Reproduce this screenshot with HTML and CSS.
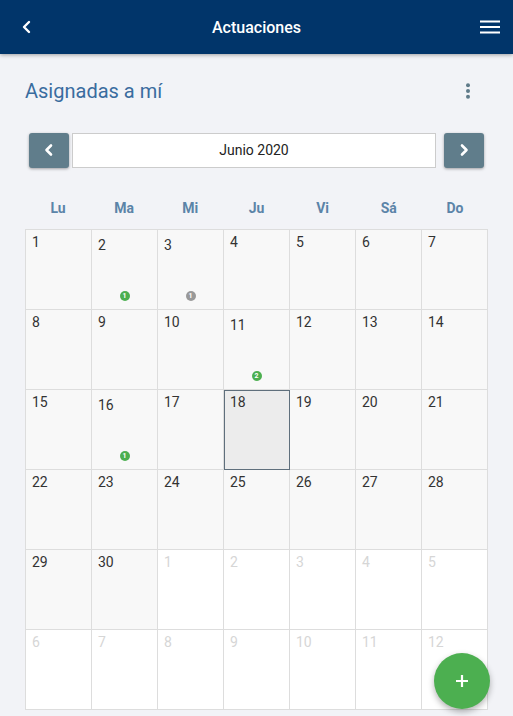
FILE: index.html
```html
<!DOCTYPE html>
<html lang="es">
<head>
    <meta charset="UTF-8">
    <meta name="viewport" content="width=device-width, initial-scale=1.0">
    <title>Actuaciones</title>
    <link rel="stylesheet" href="styles.css">
</head>
<body>
    <header class="topbar">
        <button class="icon-btn back" aria-label="Volver">
            <svg width="14" height="14" viewBox="0 0 14 14"><path d="M9 2 L4 7 L9 12" fill="none" stroke="#fff" stroke-width="2.4" stroke-linecap="round" stroke-linejoin="round"/></svg>
        </button>
        <div class="topbar-title">Actuaciones</div>
        <button class="icon-btn menu" aria-label="Menú">
            <svg width="20" height="14" viewBox="0 0 20 14"><rect x="0" y="0.5" width="20" height="2" fill="#fff"/><rect x="0" y="6" width="20" height="2" fill="#fff"/><rect x="0" y="11.5" width="20" height="2" fill="#fff"/></svg>
        </button>
    </header>

    <main class="content">
        <div class="section-head">
            <h1 class="section-title">Asignadas a mí</h1>
            <button class="kebab" aria-label="Opciones">
                <svg width="6" height="16" viewBox="0 0 6 16"><circle cx="3" cy="2.3" r="2" fill="#5f7b89"/><circle cx="3" cy="8" r="2" fill="#5f7b89"/><circle cx="3" cy="13.7" r="2" fill="#5f7b89"/></svg>
            </button>
        </div>

        <div class="month-nav">
            <button class="nav-btn" aria-label="Mes anterior">
                <svg width="12" height="14" viewBox="0 0 12 14"><path d="M8 2.5 L3.5 7 L8 11.5" fill="none" stroke="#fff" stroke-width="2.6" stroke-linecap="round" stroke-linejoin="round"/></svg>
            </button>
            <div class="month-field">Junio 2020</div>
            <button class="nav-btn" aria-label="Mes siguiente">
                <svg width="12" height="14" viewBox="0 0 12 14"><path d="M4 2.5 L8.5 7 L4 11.5" fill="none" stroke="#fff" stroke-width="2.6" stroke-linecap="round" stroke-linejoin="round"/></svg>
            </button>
        </div>

        <div class="weekdays">
            <div>Lu</div><div>Ma</div><div>Mi</div><div>Ju</div><div>Vi</div><div>Sá</div><div>Do</div>
        </div>

        <div class="calendar" id="calendar"></div>
    </main>

    <button class="fab" aria-label="Nueva actuación">
        <svg width="16" height="16" viewBox="0 0 16 16"><path d="M8 2 V14 M2 8 H14" stroke="#fff" stroke-width="2.2"/></svg>
    </button>

    <script>
        // June 2020 starts on a Monday, 30 days, then fill up to 42 cells
        const events = { 2: { n: 1, type: 'ok' }, 3: { n: 1, type: 'grey' }, 11: { n: 2, type: 'ok' }, 16: { n: 1, type: 'ok' } };
        const selected = 18;
        const cal = document.getElementById('calendar');

        for (let i = 0; i < 42; i++) {
            const cell = document.createElement('div');
            cell.className = 'day';
            let num = i + 1;
            if (num > 30) {
                num = num - 30;
                cell.classList.add('other');
            }
            const ev = !cell.classList.contains('other') ? events[num] : null;
            if (ev) cell.classList.add('has-event');
            if (num === selected && !cell.classList.contains('other')) cell.classList.add('selected');

            const label = document.createElement('span');
            label.className = 'day-num';
            label.textContent = num;
            cell.appendChild(label);

            if (ev) {
                const badge = document.createElement('span');
                badge.className = 'badge ' + ev.type;
                badge.textContent = ev.n;
                cell.appendChild(badge);
            }
            cal.appendChild(cell);
        }
    </script>
</body>
</html>
```

FILE: styles.css
```css
body {
    margin: 0;
    background-color: #f2f3f7;
    font-family: Roboto, "Noto Sans", sans-serif;
    color: #333;
}

button {
    border: none;
    background: none;
    padding: 0;
    cursor: pointer;
}

.topbar {
    height: 54px;
    background-color: #01356a;
    display: grid;
    grid-template-columns: 1fr auto 1fr;
    align-items: center;
    padding: 0 13px 0 20px;
    box-shadow: 0 1px 4px rgba(0,0,0,0.35);
    position: relative;
    z-index: 1;
}

.icon-btn {
    display: flex;
    align-items: center;
    height: 30px;
}

.icon-btn.menu {
    justify-self: end;
}

.topbar-title {
    color: #fff;
    font-size: 16px;
    font-weight: 500;
    padding-right: 7px;
}

.content {
    padding: 0 25px 0 25px;
}

.section-head {
    display: flex;
    align-items: center;
    justify-content: space-between;
    height: 76px;
}

.section-title {
    margin: 0;
    font-size: 20px;
    font-weight: 400;
    color: #3a6c9f;
    padding-bottom: 2px;
}

.kebab {
    width: 30px;
    height: 30px;
    display: flex;
    align-items: center;
    justify-content: center;
    margin-right: 5px;
    padding-bottom: 3px;
}

.month-nav {
    display: flex;
    align-items: center;
    padding: 2px 4px 0 4px;
    height: 36px;
}

.nav-btn {
    width: 40px;
    height: 35px;
    background-color: #607d8b;
    border-radius: 3px;
    box-shadow: 0 1px 3px rgba(0,0,0,0.35);
    display: flex;
    align-items: center;
    justify-content: center;
}

.month-field {
    flex: 1;
    height: 33px;
    margin: 0 8px 0 3px;
    background-color: #fff;
    border: 1px solid #ccc;
    display: flex;
    align-items: center;
    justify-content: center;
    font-size: 14px;
    color: #222;
}

.weekdays {
    display: grid;
    grid-template-columns: repeat(7, 1fr);
    margin-top: 27px;
    height: 26px;
    align-items: center;
    text-align: center;
    font-size: 14px;
    font-weight: 700;
    color: #5b84a8;
    margin-bottom: 8px;
}

.calendar {
    display: grid;
    grid-template-columns: repeat(7, 1fr);
    grid-auto-rows: 80px;
    border-top: 1px solid #ddd;
    border-left: 1px solid #ddd;
}

.day {
    background-color: #f8f8f8;
    border-right: 1px solid #ddd;
    border-bottom: 1px solid #ddd;
    position: relative;
    padding: 4px 6px;
    font-size: 14px;
}

.day.has-event {
    padding-top: 7px;
}

.day.other {
    background-color: #fff;
    color: #d6d6d6;
}

.day.selected {
    background-color: #ececec;
    outline: 1px solid #5f6f7c;
    outline-offset: -1px;
    border-color: #5f6f7c;
}

.badge {
    position: absolute;
    left: 50%;
    bottom: 8px;
    transform: translateX(-50%);
    width: 10px;
    height: 10px;
    border-radius: 50%;
    font-size: 7px;
    font-weight: 700;
    line-height: 10px;
    text-align: center;
    color: #fff;
}

.badge.ok {
    background-color: #4caf50;
}

.badge.grey {
    background-color: #999;
}

.fab {
    position: fixed;
    right: 23px;
    bottom: 7px;
    width: 56px;
    height: 56px;
    border-radius: 50%;
    background-color: #4caf50;
    box-shadow: 0 3px 6px rgba(0,0,0,0.3);
    display: flex;
    align-items: center;
    justify-content: center;
}
```
